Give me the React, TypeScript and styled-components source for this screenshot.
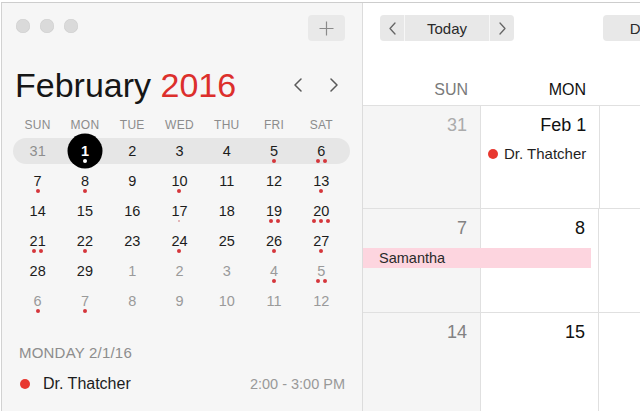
import React from 'react';
import styled, { createGlobalStyle } from 'styled-components';

const Global = createGlobalStyle`
  html, body { margin: 0; padding: 0; background: #fff; }
  body { font-family: "Liberation Sans", Arial, sans-serif; -webkit-font-smoothing: antialiased; }
  #root { width: 640px; height: 411px; overflow: hidden; }
`;

const Screen = styled.div`
  width: 640px;
  height: 411px;
  box-sizing: border-box;
  padding: 2px 0 0 1px;
  background: #fff;
  overflow: hidden;
`;

const Window = styled.div`
  display: flex;
  height: 100%;
  border-top: 1px solid #cdcdcd;
  border-left: 1px solid #d2d2d2;
  box-sizing: border-box;
`;

/* ---------- Sidebar ---------- */
const Sidebar = styled.aside`
  flex: 0 0 361px;
  box-sizing: border-box;
  padding: 0 17px 0 12px;
  background: #f6f6f6;
  border-right: 1px solid #dcdcdc;
  display: flex;
  flex-direction: column;
  & > * { flex-shrink: 0; }
`;

const TitleBar = styled.div`
  height: 47px;
  box-sizing: border-box;
  padding-top: 12px;
  display: flex;
  justify-content: space-between;
  align-items: flex-start;
`;

const Lights = styled.div`
  display: flex;
  gap: 10px;
  margin: 4px 0 0 2px;
`;

const Light = styled.span`
  width: 14px;
  height: 14px;
  border-radius: 50%;
  background: #dadada;
  box-shadow: inset 0 0 0 0.5px #cfcfcf;
`;

const PlusButton = styled.div`
  width: 37px;
  height: 26px;
  border-radius: 4px;
  background: #e9e9e9;
  display: flex;
  align-items: center;
  justify-content: center;
`;

const MonthRow = styled.div`
  height: 38px;
  margin-top: 16px;
  display: flex;
  align-items: center;
`;

const MonthTitle = styled.h1`
  margin: 0 0 0 1px;
  font-size: 34px;
  line-height: 38px;
  font-weight: 400;
  color: #161616;
`;

const Year = styled.span`
  color: #dc2f2c;
`;

const NavGroup = styled.div`
  margin-left: auto;
  margin-right: 1px;
  display: flex;
  gap: 16px;
`;

const NavButton = styled.div`
  width: 20px;
  height: 20px;
  display: flex;
  align-items: center;
  justify-content: center;
`;

const WeekdayRow = styled.div`
  display: grid;
  grid-template-columns: repeat(7, 1fr);
  margin-top: 10px;
  height: 23px;
  line-height: 22px;
  font-size: 12px;
  color: #8c8c8c;
  text-align: center;
  letter-spacing: 0.3px;
`;

const WeekRow = styled.div<{ $highlight?: boolean }>`
  display: grid;
  grid-template-columns: repeat(7, 1fr);
  height: ${(p) => (p.$highlight ? '26px' : '30px')};
  margin: ${(p) => (p.$highlight ? '1px -5px 3px -1px' : '0')};
  padding: ${(p) => (p.$highlight ? '0 5px 0 1px' : '0')};
  border-radius: 13px;
  background: ${(p) => (p.$highlight ? '#e6e6e6' : 'transparent')};
`;

const DayCell = styled.div<{ $top: number; $selected?: boolean }>`
  position: relative;
  display: flex;
  flex-direction: column;
  align-items: center;
  padding-top: ${(p) => p.$top}px;
  box-sizing: border-box;
  &::before {
    content: '';
    display: ${(p) => (p.$selected ? 'block' : 'none')};
    position: absolute;
    left: 50%;
    top: 50%;
    width: 35px;
    height: 35px;
    transform: translate(-50%, -50%);
    border-radius: 50%;
    background: #000;
  }
`;

const DayNum = styled.span<{ $tone: 'normal' | 'other' | 'selected' | 'dim' }>`
  position: relative;
  font-size: 14.5px;
  line-height: 16px;
  font-weight: ${(p) => (p.$tone === 'selected' ? 700 : 400)};
  color: ${(p) =>
    p.$tone === 'selected' ? '#fff' : p.$tone === 'other' ? '#9a9a9a' : p.$tone === 'dim' ? '#8e8e8e' : '#1c1c1c'};
`;

const Dots = styled.div`
  position: relative;
  display: flex;
  gap: 3px;
  height: 4px;
  align-items: center;
`;

const Dot = styled.span<{ $white?: boolean; $tiny?: boolean }>`
  width: ${(p) => (p.$tiny ? '2px' : '4px')};
  height: ${(p) => (p.$tiny ? '2px' : '4px')};
  border-radius: 50%;
  background: ${(p) => (p.$white ? '#fff' : p.$tiny ? '#dca2a4' : '#d5363b')};
`;

const AgendaLabel = styled.div`
  margin: 27px 0 0 5px;
  font-size: 15px;
  line-height: 18px;
  color: #8d8d8d;
  letter-spacing: 0.2px;
`;

const AgendaItem = styled.div`
  margin: 12px 0 0 6px;
  height: 20px;
  display: flex;
  align-items: center;
  gap: 13px;
`;

const EventDot = styled.span`
  flex: 0 0 10px;
  width: 10px;
  height: 10px;
  border-radius: 50%;
  background: #e8372f;
`;

const AgendaTitle = styled.span`
  font-size: 16px;
  line-height: 20px;
  color: #1c1c1c;
`;

const AgendaTime = styled.span`
  margin-left: auto;
  font-size: 14.5px;
  line-height: 20px;
  color: #999;
`;

/* ---------- Main pane ---------- */
const Main = styled.main`
  flex: 1;
  min-width: 0;
  background: #fff;
  display: flex;
  flex-direction: column;
  overflow: hidden;
  & > * { flex-shrink: 0; }
`;

const Toolbar = styled.div`
  height: 47px;
  box-sizing: border-box;
  padding: 12px 0 0 17px;
  display: flex;
  align-items: flex-start;
  gap: 89px;
`;

const Segmented = styled.div`
  display: flex;
  height: 26px;
  gap: 1px;
  background: #f7f7f7;
  border-radius: 4px;
  overflow: hidden;
  flex-shrink: 0;
`;

const Segment = styled.div<{ $w: number }>`
  width: ${(p) => p.$w}px;
  height: 26px;
  background: #e8e8e8;
  display: flex;
  align-items: center;
  justify-content: center;
  font-size: 15px;
  color: #2a2a2a;
  flex-shrink: 0;
`;

const HeaderRow = styled.div`
  display: flex;
  height: 56px;
  box-sizing: border-box;
  border-bottom: 1px solid #e0e0e0;
`;

const HeaderCell = styled.div<{ $active?: boolean }>`
  flex: 0 0 118px;
  box-sizing: border-box;
  padding: 30px 13px 0 0;
  text-align: right;
  font-size: 16px;
  line-height: 20px;
  font-weight: ${(p) => (p.$active ? 500 : 400)};
  color: ${(p) => (p.$active ? '#111' : '#7a7a7a')};
`;

const GridWeek = styled.div<{ $h: number }>`
  position: relative;
  display: flex;
  height: ${(p) => p.$h}px;
  box-sizing: border-box;
  border-bottom: 1px solid #e0e0e0;
`;

const GridCell = styled.div<{ $weekend?: boolean }>`
  flex: 0 0 118px;
  box-sizing: border-box;
  padding: 8px 13px 0 7px;
  border-right: 1px solid #e0e0e0;
  background: ${(p) => (p.$weekend ? '#f5f5f5' : '#fff')};
  display: flex;
  flex-direction: column;
`;

const CellDate = styled.div<{ $tone: 'dark' | 'gray' | 'light' }>`
  text-align: right;
  font-size: 18px;
  line-height: 22px;
  color: ${(p) => (p.$tone === 'dark' ? '#111' : p.$tone === 'gray' ? '#828282' : '#ababab')};
`;

const CellEvent = styled.div`
  margin-top: 8px;
  display: flex;
  align-items: center;
  gap: 6px;
  font-size: 15px;
  line-height: 20px;
  color: #1f1f1f;
  white-space: nowrap;
`;

const SpanEvent = styled.div`
  position: absolute;
  left: 0;
  top: 39px;
  width: 228px;
  height: 20px;
  box-sizing: border-box;
  padding-left: 16px;
  background: #fdd5df;
  font-size: 14.5px;
  line-height: 20px;
  color: #2a2a2a;
`;

/* ---------- Icons ---------- */
const Chevron = ({ dir, w = 8, h = 14, color = '#5a5a5a', sw = 1.5 }: { dir: 'l' | 'r'; w?: number; h?: number; color?: string; sw?: number }) => (
  <svg width={w} height={h} viewBox={`0 0 ${w} ${h}`}>
    <polyline
      points={dir === 'l' ? `${w - 1},1 1,${h / 2} ${w - 1},${h - 1}` : `1,1 ${w - 1},${h / 2} 1,${h - 1}`}
      fill="none"
      stroke={color}
      strokeWidth={sw}
      strokeLinecap="round"
      strokeLinejoin="round"
    />
  </svg>
);

const Plus = () => (
  <svg width="15" height="15" viewBox="0 0 15 15">
    <path d="M7.5 0.5V14.5M0.5 7.5H14.5" stroke="#8a8a8a" strokeWidth="1.2" />
  </svg>
);

/* ---------- Data ---------- */
type Day = { n: number; other?: boolean; dots?: number; tiny?: boolean; selected?: boolean };
const weeks: Day[][] = [
  [{ n: 31, other: true }, { n: 1, selected: true, dots: 1 }, { n: 2 }, { n: 3 }, { n: 4 }, { n: 5, dots: 1 }, { n: 6, dots: 2 }],
  [{ n: 7, dots: 1 }, { n: 8, dots: 1 }, { n: 9 }, { n: 10, dots: 1 }, { n: 11 }, { n: 12 }, { n: 13, dots: 1 }],
  [{ n: 14 }, { n: 15 }, { n: 16 }, { n: 17, tiny: true }, { n: 18 }, { n: 19, dots: 2 }, { n: 20, dots: 3 }],
  [{ n: 21, dots: 2 }, { n: 22, dots: 1 }, { n: 23 }, { n: 24, dots: 1 }, { n: 25 }, { n: 26, dots: 1 }, { n: 27, dots: 1 }],
  [{ n: 28 }, { n: 29 }, { n: 1, other: true }, { n: 2, other: true }, { n: 3, other: true }, { n: 4, other: true, dots: 1 }, { n: 5, other: true, dots: 2 }],
  [{ n: 6, other: true, dots: 1 }, { n: 7, other: true, dots: 1 }, { n: 8, other: true }, { n: 9, other: true }, { n: 10, other: true }, { n: 11, other: true }, { n: 12, other: true }],
];
const weekdays = ['SUN', 'MON', 'TUE', 'WED', 'THU', 'FRI', 'SAT'];

/* Only the columns that fall inside the window are drawn in the main grid */
const bigHeaders = ['SUN', 'MON', ''];
const bigWeeks = [
  { h: 103, days: ['31', 'Feb 1', ''] },
  { h: 104, days: ['7', '8', ''] },
  { h: 104, days: ['14', '15', ''] },
];

export default function App() {
  return (
    <>
      <Global />
      <Screen>
        <Window>
          <Sidebar>
            <TitleBar>
              <Lights>
                <Light />
                <Light />
                <Light />
              </Lights>
              <PlusButton>
                <Plus />
              </PlusButton>
            </TitleBar>
            <MonthRow>
              <MonthTitle>
                February <Year>2016</Year>
              </MonthTitle>
              <NavGroup>
                <NavButton>
                  <Chevron dir="l" />
                </NavButton>
                <NavButton>
                  <Chevron dir="r" />
                </NavButton>
              </NavGroup>
            </MonthRow>
            <WeekdayRow>
              {weekdays.map((d) => (
                <span key={d}>{d}</span>
              ))}
            </WeekdayRow>
            {weeks.map((week, wi) => (
              <WeekRow key={wi} $highlight={wi === 0}>
                {week.map((d, di) => {
                  const tone = d.selected ? 'selected' : d.other ? (wi === 0 ? 'dim' : 'other') : 'normal';
                  return (
                    <DayCell key={di} $top={wi === 0 ? 5 : 6} $selected={d.selected}>
                      <DayNum $tone={tone}>{d.n}</DayNum>
                      <Dots>
                        {d.tiny && <Dot $tiny />}
                        {Array.from({ length: d.dots ?? 0 }).map((_, k) => (
                          <Dot key={k} $white={d.selected} />
                        ))}
                      </Dots>
                    </DayCell>
                  );
                })}
              </WeekRow>
            ))}
            <AgendaLabel>MONDAY 2/1/16</AgendaLabel>
            <AgendaItem>
              <EventDot />
              <AgendaTitle>Dr. Thatcher</AgendaTitle>
              <AgendaTime>2:00 - 3:00 PM</AgendaTime>
            </AgendaItem>
          </Sidebar>
          <Main>
            <Toolbar>
              <Segmented>
                <Segment $w={24}>
                  <Chevron dir="l" w={7} h={13} color="#666" sw={1.3} />
                </Segment>
                <Segment $w={84}>Today</Segment>
                <Segment $w={24}>
                  <Chevron dir="r" w={7} h={13} color="#666" sw={1.3} />
                </Segment>
              </Segmented>
              <Segmented>
                <Segment $w={80}>Day</Segment>
              </Segmented>
            </Toolbar>
            <HeaderRow>
              {bigHeaders.map((d, i) => (
                <HeaderCell key={i} $active={i === 1}>
                  {d}
                </HeaderCell>
              ))}
            </HeaderRow>
            {bigWeeks.map((w, wi) => (
              <GridWeek key={wi} $h={w.h}>
                {w.days.map((d, di) => (
                  <GridCell key={di} $weekend={di === 0}>
                    <CellDate $tone={di === 0 ? (wi === 0 ? 'light' : 'gray') : 'dark'}>{d}</CellDate>
                    {wi === 0 && di === 1 && (
                      <CellEvent>
                        <EventDot />
                        Dr. Thatcher
                      </CellEvent>
                    )}
                  </GridCell>
                ))}
                {wi === 1 && <SpanEvent>Samantha</SpanEvent>}
              </GridWeek>
            ))}
          </Main>
        </Window>
      </Screen>
    </>
  );
}
